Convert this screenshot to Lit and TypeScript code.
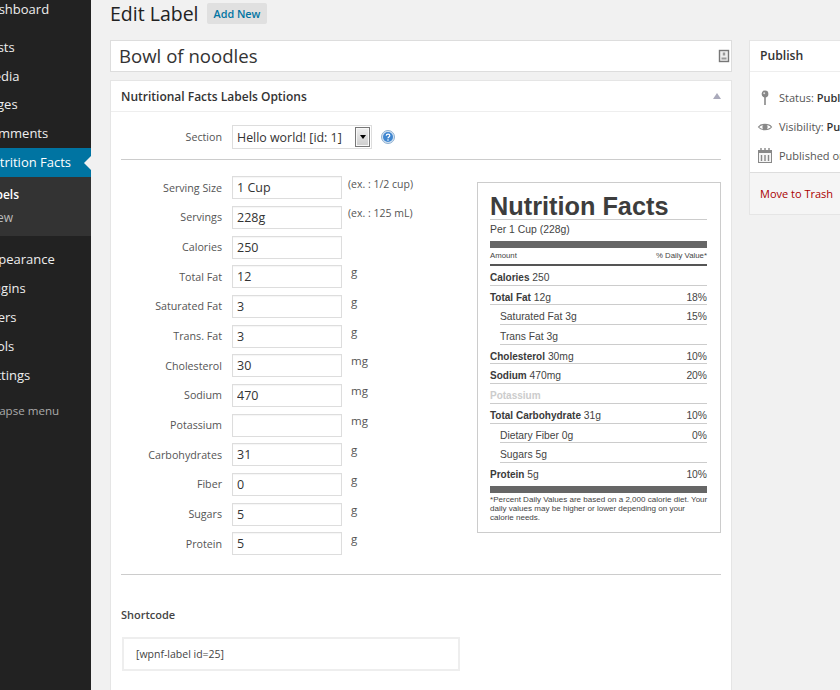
import { LitElement, css, html } from 'lit';
import { customElement } from 'lit/decorators.js';

const MENU_TOP = ['Posts', 'Media', 'Pages', 'Comments'];
const MENU_BOTTOM = ['Appearance', 'Plugins', 'Users', 'Tools', 'Settings'];

const FIELDS = [
  { label: 'Serving Size', value: '1 Cup', hint: '(ex. : 1/2 cup)' },
  { label: 'Servings', value: '228g', hint: '(ex. : 125 mL)' },
  { label: 'Calories', value: '250', hint: '' },
  { label: 'Total Fat', value: '12', unit: 'g' },
  { label: 'Saturated Fat', value: '3', unit: 'g' },
  { label: 'Trans. Fat', value: '3', unit: 'g' },
  { label: 'Cholesterol', value: '30', unit: 'mg' },
  { label: 'Sodium', value: '470', unit: 'mg' },
  { label: 'Potassium', value: '', unit: 'mg' },
  { label: 'Carbohydrates', value: '31', unit: 'g' },
  { label: 'Fiber', value: '0', unit: 'g' },
  { label: 'Sugars', value: '5', unit: 'g' },
  { label: 'Protein', value: '5', unit: 'g' },
];

const FACTS = [
  { name: 'Calories', amount: '250', pct: '' },
  { name: 'Total Fat', amount: '12g', pct: '18%' },
  { name: 'Saturated Fat', amount: '3g', pct: '15%', sub: true },
  { name: 'Trans Fat', amount: '3g', pct: '', sub: true },
  { name: 'Cholesterol', amount: '30mg', pct: '10%' },
  { name: 'Sodium', amount: '470mg', pct: '20%' },
  { name: 'Potassium', amount: '', pct: '', off: true },
  { name: 'Total Carbohydrate', amount: '31g', pct: '10%' },
  { name: 'Dietary Fiber', amount: '0g', pct: '0%', sub: true },
  { name: 'Sugars', amount: '5g', pct: '', sub: true },
  { name: 'Protein', amount: '5g', pct: '10%' },
];

@customElement('nutrition-label')
export class NutritionLabel extends LitElement {
  static styles = css`
    :host {
      display: block;
      box-sizing: border-box;
      width: 244px;
      height: 351px;
      padding: 11px 13px 0 12px;
      background: #fff;
      border: 1px solid #ccc;
      font-family: 'Liberation Sans', Arial, sans-serif;
      color: #444;
    }
    h2 {
      margin: 0;
      font-size: 25.3px;
      line-height: 25px;
      font-weight: 700;
      color: #3d3d3d;
      border-bottom: 1px solid #ccc;
    }
    .per {
      font-size: 10.4px;
      line-height: 20px;
    }
    .bar {
      height: 7px;
      margin-top: 1px;
      background: #666;
    }
    .heads {
      display: flex;
      justify-content: space-between;
      font-size: 7.8px;
      line-height: 15px;
      height: 16px;
      border-bottom: 2px solid #555;
    }
    .row {
      display: flex;
      justify-content: space-between;
      box-sizing: border-box;
      height: 19.7px;
      line-height: 23.5px;
      font-size: 10.3px;
      border-bottom: 1px solid #ccc;
    }
    .row.sub {
      margin-left: 10px;
    }
    .row.last {
      border-bottom: none;
    }
    .row.off {
      color: #ccc;
    }
    b {
      font-size: 10px;
      color: #3a3a3a;
    }
    .row.off b {
      color: #ccc;
    }
    .end {
      margin-top: 3px;
    }
    .foot {
      font-size: 8.05px;
      line-height: 9px;
      margin-top: 2px;
      white-space: nowrap;
    }
  `;

  render() {
    return html`
      <h2>Nutrition Facts</h2>
      <div class="per">Per 1 Cup (228g)</div>
      <div class="bar"></div>
      <div class="heads"><span>Amount</span><span>% Daily Value*</span></div>
      ${FACTS.map(
        (f, i) => html`
          <div class="row ${f.sub ? 'sub' : ''} ${f.off ? 'off' : ''} ${i === FACTS.length - 1 ? 'last' : ''}">
            <span>${f.sub ? f.name : html`<b>${f.name}</b>`} ${f.amount}</span>
            <span>${f.pct}</span>
          </div>
        `
      )}
      <div class="bar end"></div>
      <div class="foot">
        *Percent Daily Values are based on a 2,000 calorie diet. Your<br />
        daily values may be higher or lower depending on your<br />
        calorie needs.
      </div>
    `;
  }
}

@customElement('app-root')
export class AppRoot extends LitElement {
  static styles = css`
    :host {
      display: grid;
      grid-template-columns: 91px 1fr;
      width: 840px;
      height: 690px;
      overflow: hidden;
      background: #f1f1f1;
      font-family: 'Open Sans', sans-serif;
      font-size: 13px;
      color: #444;
    }

    /* sidebar, cropped on its left side */
    .menu {
      background: #222;
      overflow: hidden;
      color: #eee;
    }
    .menu-item {
      height: 28.8px;
      line-height: 28.8px;
      margin-left: -18px;
      white-space: nowrap;
      width: 109px;
    }
    .menu-first {
      margin-top: -5px;
      margin-bottom: 9px;
    }
    .menu-active {
      background: #0074a2;
      color: #fff;
      position: relative;
    }
    .menu-active::after {
      content: '';
      position: absolute;
      right: 0;
      top: 8px;
      border: 7px solid transparent;
      border-left: none;
      border-right-color: #f1f1f1;
    }
    .submenu {
      background: #333;
      height: 59px;
      padding-top: 6px;
      box-sizing: border-box;
      margin-bottom: 9.6px;
      font-size: 12px;
      line-height: 23px;
      color: #bbb;
    }
    .submenu div {
      margin-left: -12px;
      white-space: nowrap;
    }
    .submenu .current {
      margin-left: -18px;
      color: #fff;
      font-weight: 600;
    }
    .collapse {
      margin-top: 8px;
      margin-left: -21px;
      color: #aaa;
      font-size: 11.6px;
      line-height: 28px;
      white-space: nowrap;
    }

    .content {
      padding: 0 0 0 19px;
      min-width: 0;
    }
    .title-row {
      display: flex;
      align-items: center;
      gap: 8px;
      height: 27px;
      margin-bottom: 13px;
    }
    h1 {
      margin: 0;
      font-size: 19.5px;
      font-weight: 400;
      color: #222;
      line-height: 27px;
    }
    .add-new {
      background: #e0e0e0;
      color: #0074a2;
      font-size: 10.8px;
      font-weight: 600;
      padding: 0 7px;
      height: 21px;
      line-height: 21px;
      border-radius: 2px;
    }
    .columns {
      display: flex;
      gap: 17px;
      align-items: flex-start;
    }
    .main-col {
      flex: 0 0 622px;
    }
    .title-input {
      box-sizing: border-box;
      height: 32px;
      background: #fff;
      border: 1px solid #ddd;
      display: flex;
      align-items: center;
      justify-content: space-between;
      padding: 0 1px 0 8px;
      font-size: 18.6px;
      color: #333;
      margin-bottom: 8px;
    }
    .title-input span {
      padding-bottom: 2px;
    }
    .box {
      background: #fff;
      border: 1px solid #e5e5e5;
    }
    .box-head {
      box-sizing: border-box;
      height: 31px;
      border-bottom: 1px solid #eee;
      padding: 0 10px;
      font-size: 12px;
      font-weight: 600;
      color: #333;
      display: flex;
      justify-content: space-between;
      align-items: center;
    }
    .caret {
      border: 4px solid transparent;
      border-top: none;
      border-bottom: 6px solid #aab;
    }
    .options {
      height: 620px;
      padding: 13px 10px 0;
    }
    .section {
      display: flex;
      align-items: center;
      height: 24px;
    }
    .label {
      width: 101px;
      text-align: right;
      font-size: 10.7px;
      color: #555;
      margin-right: 10px;
      flex: none;
    }
    .select {
      box-sizing: border-box;
      width: 140px;
      height: 24px;
      border: 1px solid #ddd;
      display: flex;
      align-items: center;
      justify-content: space-between;
      padding: 0 1px 0 4px;
      font-size: 12.4px;
      color: #333;
    }
    .select-btn {
      box-sizing: border-box;
      width: 15px;
      height: 20px;
      border: 1px solid #777;
      box-shadow: inset 0 0 0 1px #f8f8f8;
      background: linear-gradient(#f0f0f0, #ccc);
      display: flex;
      align-items: center;
      justify-content: center;
    }
    .select-btn::before {
      content: '';
      border: 3px solid transparent;
      border-bottom: none;
      border-top: 4px solid #000;
    }
    .help {
      margin-left: 9px;
    }
    hr {
      border: none;
      border-top: 1px solid #ccc;
      margin: 0;
    }
    .section + hr {
      margin-top: 10px;
    }
    .body {
      display: flex;
      gap: 0;
    }
    .fields {
      width: 356px;
      padding-top: 13px;
    }
    .field {
      display: flex;
      align-items: center;
      height: 29.67px;
    }
    input {
      box-sizing: border-box;
      width: 110px;
      height: 23px;
      flex: none;
      border: 1px solid #ddd;
      padding: 0 4px;
      margin: 0;
      font: 12.5px 'Open Sans', sans-serif;
      color: #333;
      outline: none;
      box-shadow: inset 0 1px 1px rgba(0, 0, 0, 0.04);
    }
    .hint {
      font-size: 10.5px;
      color: #555;
      margin-left: 6px;
      position: relative;
      top: -4px;
    }
    .unit {
      font-size: 11.5px;
      color: #555;
      margin-left: 9px;
      position: relative;
      top: -5px;
    }
    .label-col {
      padding-top: 22px;
    }
    .body + hr {
      margin-top: 15px;
    }
    .shortcode-title {
      margin-top: 31px;
      font-size: 11px;
      font-weight: 600;
      color: #444;
      line-height: 17px;
    }
    .shortcode {
      box-sizing: border-box;
      width: 338px;
      height: 34px;
      margin: 14px 0 0 1px;
      border: 2px solid #eee;
      padding: 0 12px;
      line-height: 30px;
      font-size: 10.5px;
      color: #444;
    }
    .side-col {
      flex: 0 0 200px;
    }
    .publish-head {
      height: 30px;
      line-height: 30px;
      padding: 0 10px;
      border-bottom: 1px solid #eee;
      font-weight: 600;
      font-size: 12.2px;
      color: #333;
    }
    .publish-body {
      padding: 11px 7px 2px;
    }
    .pub-row {
      display: flex;
      align-items: center;
      gap: 6px;
      height: 29px;
      font-size: 11px;
      color: #555;
      white-space: nowrap;
    }
    .pub-row svg {
      flex: none;
    }
    .pub-row b {
      font-weight: 600;
      color: #333;
    }
    .publish-foot {
      height: 41px;
      line-height: 41px;
      padding: 0 10px;
      background: #f5f5f5;
      border-top: 1px solid #ddd;
      color: #a00;
      font-size: 11px;
    }
  `;

  render() {
    return html`
      <nav class="menu">
        <div class="menu-item menu-first">Dashboard</div>
        ${MENU_TOP.map((m) => html`<div class="menu-item">${m}</div>`)}
        <div class="menu-item menu-active">Nutrition Facts</div>
        <div class="submenu">
          <div class="current">Labels</div>
          <div>New</div>
        </div>
        ${MENU_BOTTOM.map((m) => html`<div class="menu-item">${m}</div>`)}
        <div class="collapse">Collapse menu</div>
      </nav>

      <main class="content">
        <div class="title-row">
          <h1>Edit Label</h1>
          <span class="add-new">Add New</span>
        </div>
        <div class="columns">
          <div class="main-col">
            <div class="title-input">
              <span>Bowl of noodles</span>
              <svg width="12" height="14" viewBox="0 0 12 14">
                <rect x="1.5" y="1.5" width="9" height="11" fill="#eee" stroke="#777" stroke-width="1.4" />
                <path d="M4.8 3.5h2.4v3H4.8zM3.5 8.5h5v2h-5z" fill="#999" />
              </svg>
            </div>
            <section class="box">
              <div class="box-head">
                <span>Nutritional Facts Labels Options</span>
                <span class="caret"></span>
              </div>
              <div class="options">
                <div class="section">
                  <span class="label">Section</span>
                  <div class="select">
                    <span>Hello world! [id: 1]</span>
                    <span class="select-btn"></span>
                  </div>
                  <svg class="help" width="14" height="14" viewBox="0 0 14 14">
                    <circle cx="7" cy="7" r="6.5" fill="#d5e4f3" stroke="#8fb0d0" />
                    <circle cx="7" cy="7" r="5" fill="#3f86d0" />
                    <path d="M5.2 5.6c.2-2 3.6-1.9 3.6 0 0 1.3-1.8 1.3-1.8 2.6" fill="none" stroke="#fff" stroke-width="1.2" />
                    <circle cx="7" cy="10" r=".8" fill="#fff" />
                  </svg>
                </div>
                <hr />
                <div class="body">
                  <div class="fields">
                    ${FIELDS.map(
                      (f) => html`
                        <div class="field">
                          <span class="label">${f.label}</span>
                          <input .value=${f.value} />
                          ${f.hint ? html`<span class="hint">${f.hint}</span>` : ''}
                          ${f.unit ? html`<span class="unit">${f.unit}</span>` : ''}
                        </div>
                      `
                    )}
                  </div>
                  <div class="label-col"><nutrition-label></nutrition-label></div>
                </div>
                <hr />
                <div class="shortcode-title">Shortcode</div>
                <div class="shortcode">[wpnf-label id=25]</div>
              </div>
            </section>
          </div>
          <aside class="side-col box">
            <div class="publish-head">Publish</div>
            <div class="publish-body">
              <div class="pub-row">
                <svg width="16" height="16" viewBox="0 0 16 16">
                  <circle cx="8" cy="4" r="3.4" fill="#888" />
                  <circle cx="7.2" cy="3.2" r="1" fill="#ddd" />
                  <path d="M8 7v8" stroke="#888" stroke-width="1.6" />
                </svg>
                <span>Status: <b>Published</b></span>
              </div>
              <div class="pub-row">
                <svg width="16" height="16" viewBox="0 0 16 16">
                  <path d="M1.5 8C4 4.5 12 4.5 14.5 8 12 11.5 4 11.5 1.5 8z" fill="none" stroke="#888" stroke-width="1.2" />
                  <circle cx="8" cy="8" r="2.6" fill="#888" />
                </svg>
                <span>Visibility: <b>Public</b></span>
              </div>
              <div class="pub-row">
                <svg width="16" height="16" viewBox="0 0 16 16">
                  <rect x="1.5" y="2.5" width="13" height="12" fill="#f5f5f5" stroke="#888" />
                  <rect x="1" y="2" width="14" height="3" fill="#888" />
                  <path d="M4 0v3M8 0v3M12 0v3M4.5 7v6M8 7v6M11.5 7v6" stroke="#888" stroke-width="1.4" />
                </svg>
                <span>Published on: <b>Jan 1</b></span>
              </div>
            </div>
            <div class="publish-foot">Move to Trash</div>
          </aside>
        </div>
      </main>
    `;
  }
}
